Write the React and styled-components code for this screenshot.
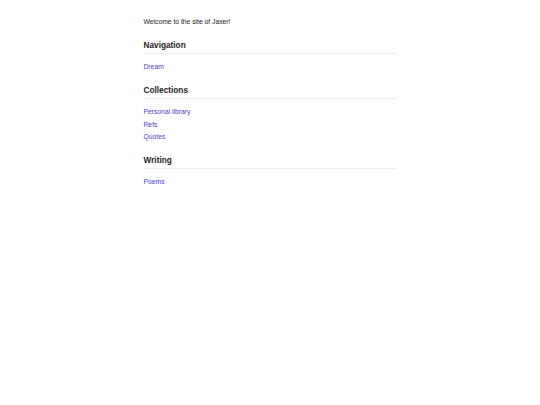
import React from "react";
import styled, { createGlobalStyle } from "styled-components";

const GlobalStyle = createGlobalStyle`
  html, body {
    margin: 0;
    padding: 0;
    background: #ffffff;
  }
  body {
    font-family: "Liberation Sans", Arial, sans-serif;
    color: #222222;
  }
`;

const Page = styled.div`
  width: 253px;
  margin: 0 auto;
  padding-top: 16px;
`;

const Intro = styled.p`
  margin: 0;
  font-size: 6.75px;
  line-height: 12.5px;
  color: #222222;
`;

const Section = styled.section`
  margin-top: 12.75px;
`;

const Heading = styled.h2`
  margin: 0;
  font-size: 8.25px;
  line-height: 10px;
  font-weight: bold;
  color: #222222;
  padding-bottom: 2px;
  border-bottom: 1px solid #ececec;
`;

const LinkList = styled.ul`
  list-style: none;
  margin: 6.75px 0 0;
  padding: 0;
`;

const Item = styled.li`
  font-size: 6.75px;
  line-height: 12.5px;
`;

const Link = styled.a`
  color: #4b40cf;
  text-decoration: none;
`;

const sections = [
  { title: "Navigation", links: ["Dream"] },
  { title: "Collections", links: ["Personal library", "Refs", "Quotes"] },
  { title: "Writing", links: ["Poems"] },
];

const App = () => {
  return (
    <>
      <GlobalStyle />
      <Page>
        <Intro>Welcome to the site of Jaxer!</Intro>
        {sections.map((s) => (
          <Section key={s.title}>
            <Heading>{s.title}</Heading>
            <LinkList>
              {s.links.map((l) => (
                <Item key={l}>
                  <Link href="#">{l}</Link>
                </Item>
              ))}
            </LinkList>
          </Section>
        ))}
      </Page>
    </>
  );
};

export default App;
